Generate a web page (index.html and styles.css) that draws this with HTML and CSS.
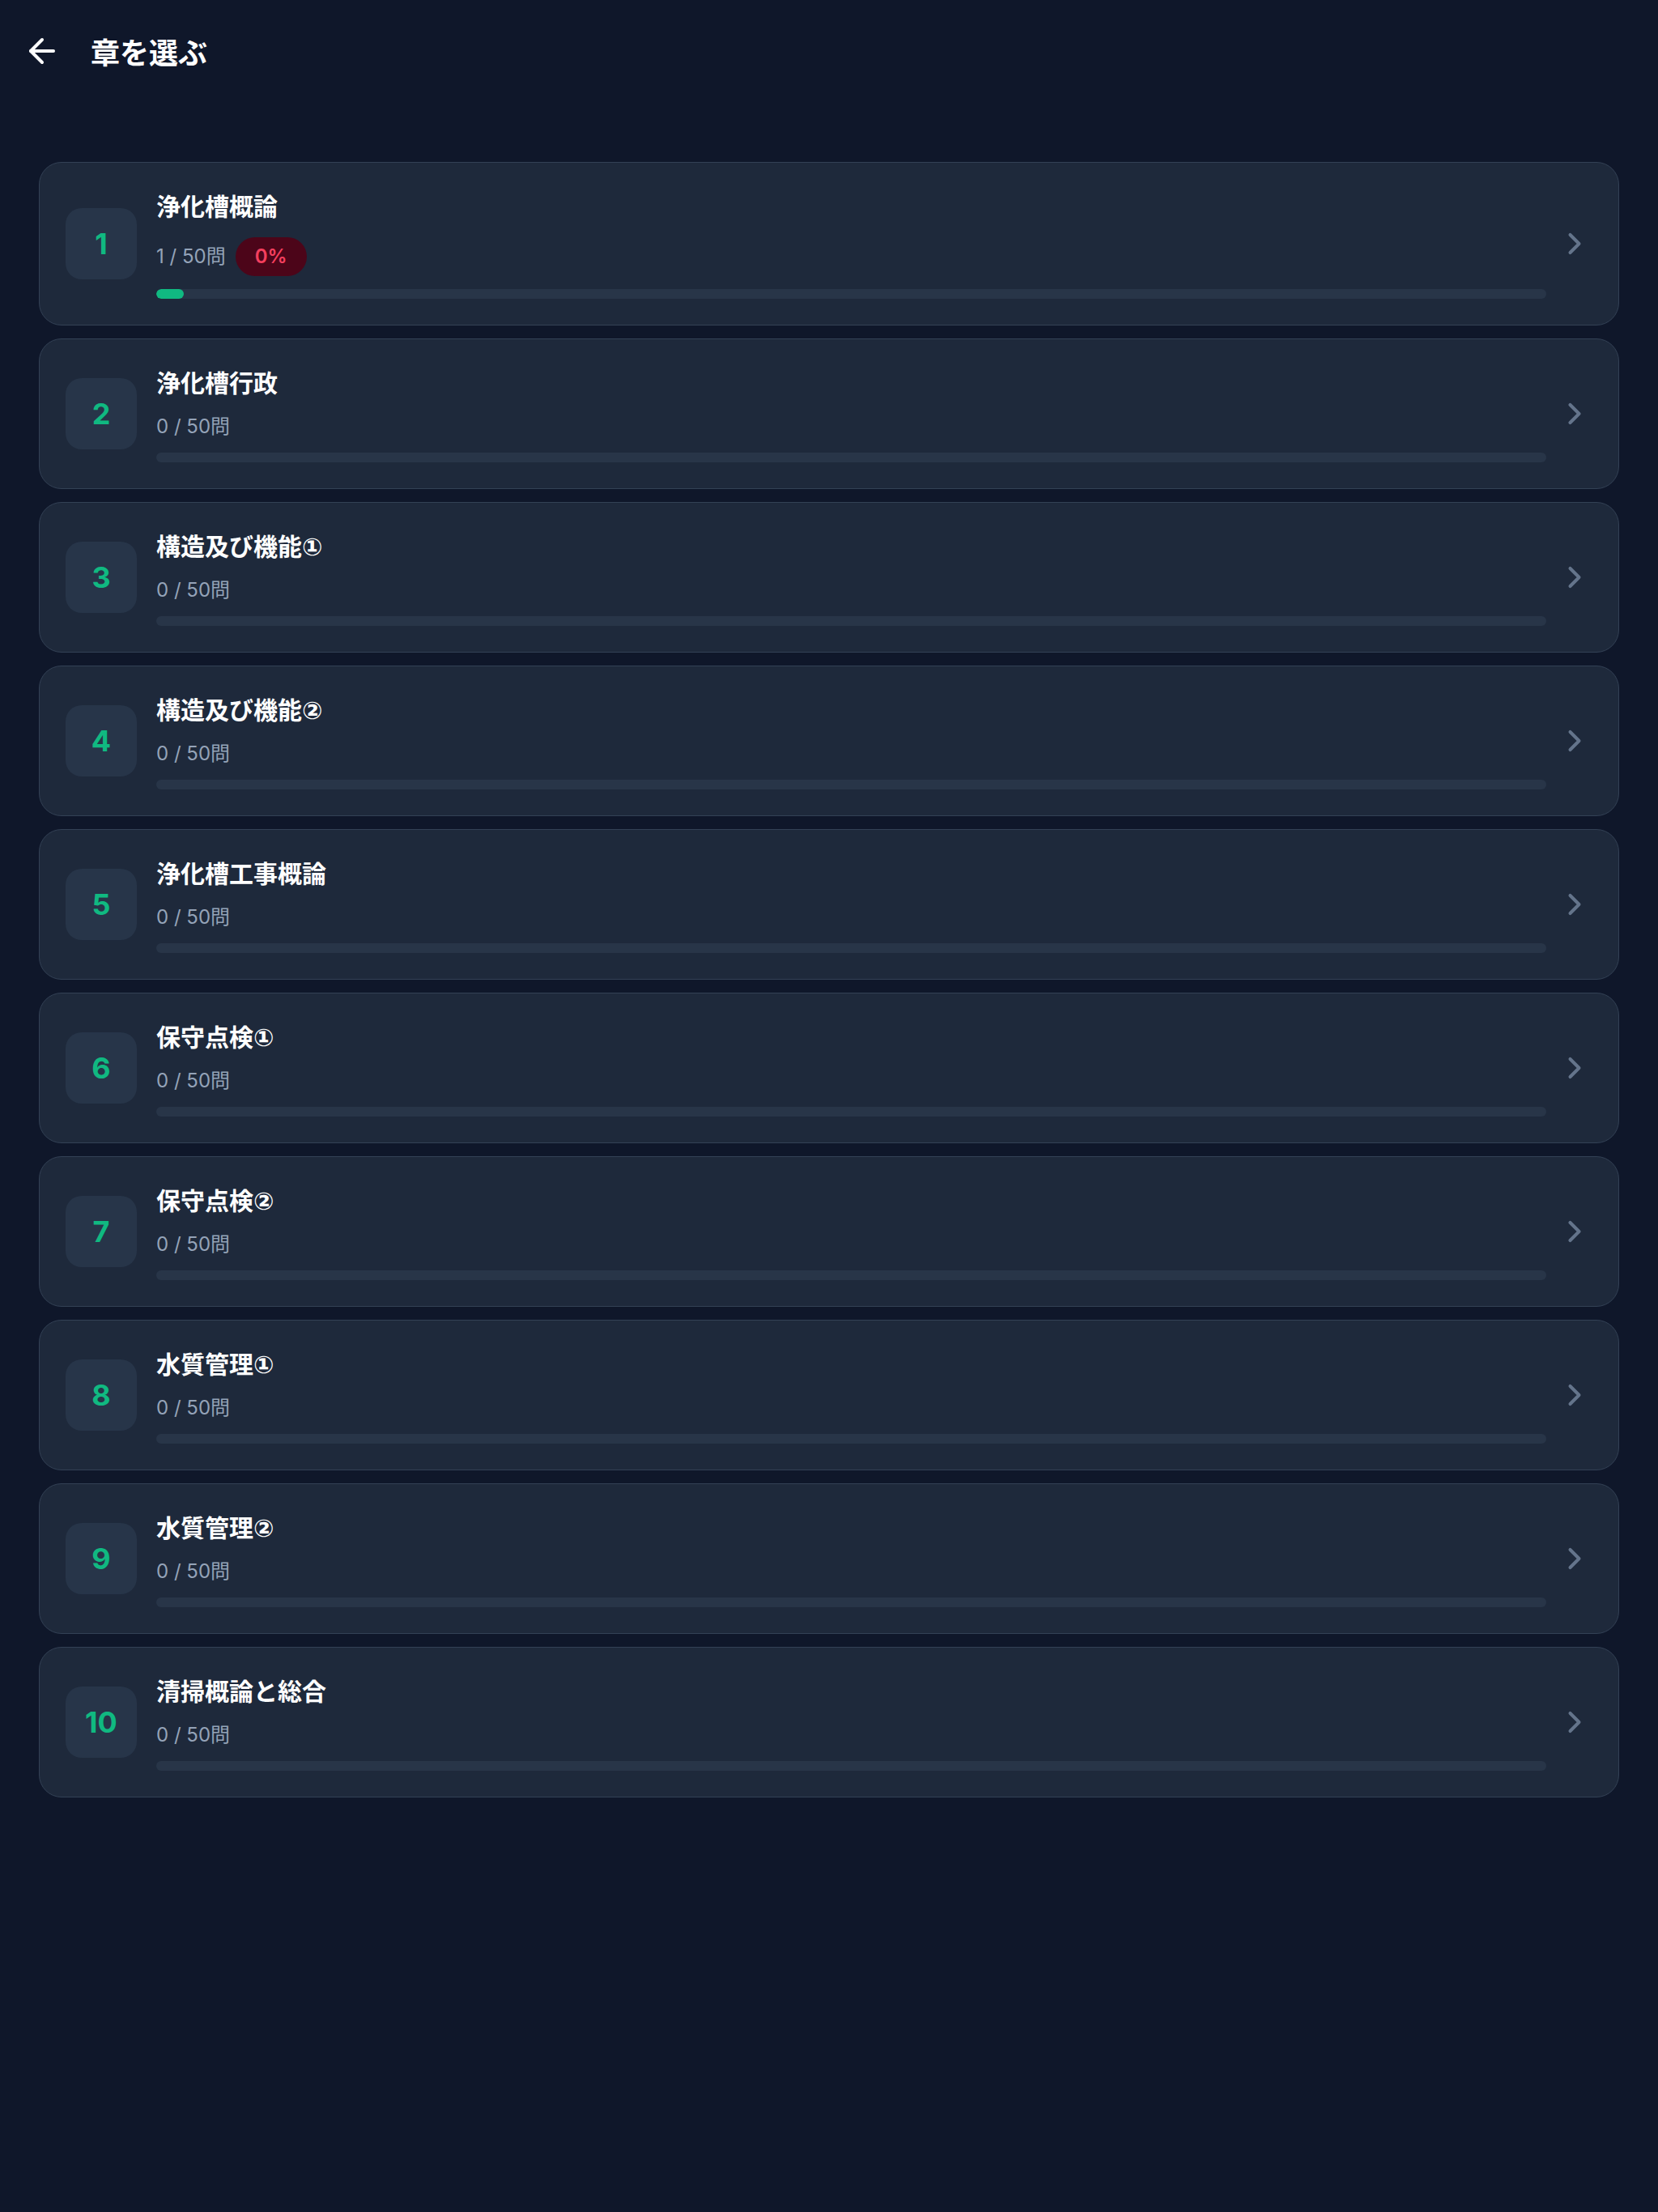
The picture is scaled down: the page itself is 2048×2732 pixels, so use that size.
FILE: index.html
```html
<!DOCTYPE html>
<html lang="ja">
<head>
    <meta charset="UTF-8">
    <meta name="viewport" content="width=device-width, initial-scale=1.0">
    <title>章を選ぶ</title>
    <link rel="stylesheet" href="styles.css">
</head>
<body>
    <header class="top-bar">
        <button class="back-btn" aria-label="戻る">
            <svg width="48" height="48" viewBox="0 0 24 24" fill="none" stroke="currentColor" stroke-width="2" stroke-linecap="round" stroke-linejoin="round">
                <path d="m12 19-7-7 7-7"/>
                <path d="M19 12H5"/>
            </svg>
        </button>
        <h1>章を選ぶ</h1>
    </header>

    <main class="chapter-list">
        <a class="chapter-card" href="#">
            <div class="chapter-num">1</div>
            <div class="chapter-body">
                <div class="chapter-title">浄化槽概論</div>
                <div class="chapter-meta">
                    <span class="count">1 / 50問</span>
                    <span class="rate-badge">0%</span>
                </div>
                <div class="progress"><div class="progress-fill" style="width: 2%"></div></div>
            </div>
            <svg class="chevron" width="44" height="44" viewBox="0 0 24 24" fill="none" stroke="currentColor" stroke-width="2.2" stroke-linecap="round" stroke-linejoin="round"><path d="m9 18 6-6-6-6"/></svg>
        </a>

        <a class="chapter-card" href="#">
            <div class="chapter-num">2</div>
            <div class="chapter-body">
                <div class="chapter-title">浄化槽行政</div>
                <div class="chapter-meta"><span class="count">0 / 50問</span></div>
                <div class="progress"></div>
            </div>
            <svg class="chevron" width="44" height="44" viewBox="0 0 24 24" fill="none" stroke="currentColor" stroke-width="2.2" stroke-linecap="round" stroke-linejoin="round"><path d="m9 18 6-6-6-6"/></svg>
        </a>

        <a class="chapter-card" href="#">
            <div class="chapter-num">3</div>
            <div class="chapter-body">
                <div class="chapter-title">構造及び機能①</div>
                <div class="chapter-meta"><span class="count">0 / 50問</span></div>
                <div class="progress"></div>
            </div>
            <svg class="chevron" width="44" height="44" viewBox="0 0 24 24" fill="none" stroke="currentColor" stroke-width="2.2" stroke-linecap="round" stroke-linejoin="round"><path d="m9 18 6-6-6-6"/></svg>
        </a>

        <a class="chapter-card" href="#">
            <div class="chapter-num">4</div>
            <div class="chapter-body">
                <div class="chapter-title">構造及び機能②</div>
                <div class="chapter-meta"><span class="count">0 / 50問</span></div>
                <div class="progress"></div>
            </div>
            <svg class="chevron" width="44" height="44" viewBox="0 0 24 24" fill="none" stroke="currentColor" stroke-width="2.2" stroke-linecap="round" stroke-linejoin="round"><path d="m9 18 6-6-6-6"/></svg>
        </a>

        <a class="chapter-card" href="#">
            <div class="chapter-num">5</div>
            <div class="chapter-body">
                <div class="chapter-title">浄化槽工事概論</div>
                <div class="chapter-meta"><span class="count">0 / 50問</span></div>
                <div class="progress"></div>
            </div>
            <svg class="chevron" width="44" height="44" viewBox="0 0 24 24" fill="none" stroke="currentColor" stroke-width="2.2" stroke-linecap="round" stroke-linejoin="round"><path d="m9 18 6-6-6-6"/></svg>
        </a>

        <a class="chapter-card" href="#">
            <div class="chapter-num">6</div>
            <div class="chapter-body">
                <div class="chapter-title">保守点検①</div>
                <div class="chapter-meta"><span class="count">0 / 50問</span></div>
                <div class="progress"></div>
            </div>
            <svg class="chevron" width="44" height="44" viewBox="0 0 24 24" fill="none" stroke="currentColor" stroke-width="2.2" stroke-linecap="round" stroke-linejoin="round"><path d="m9 18 6-6-6-6"/></svg>
        </a>

        <a class="chapter-card" href="#">
            <div class="chapter-num">7</div>
            <div class="chapter-body">
                <div class="chapter-title">保守点検②</div>
                <div class="chapter-meta"><span class="count">0 / 50問</span></div>
                <div class="progress"></div>
            </div>
            <svg class="chevron" width="44" height="44" viewBox="0 0 24 24" fill="none" stroke="currentColor" stroke-width="2.2" stroke-linecap="round" stroke-linejoin="round"><path d="m9 18 6-6-6-6"/></svg>
        </a>

        <a class="chapter-card" href="#">
            <div class="chapter-num">8</div>
            <div class="chapter-body">
                <div class="chapter-title">水質管理①</div>
                <div class="chapter-meta"><span class="count">0 / 50問</span></div>
                <div class="progress"></div>
            </div>
            <svg class="chevron" width="44" height="44" viewBox="0 0 24 24" fill="none" stroke="currentColor" stroke-width="2.2" stroke-linecap="round" stroke-linejoin="round"><path d="m9 18 6-6-6-6"/></svg>
        </a>

        <a class="chapter-card" href="#">
            <div class="chapter-num">9</div>
            <div class="chapter-body">
                <div class="chapter-title">水質管理②</div>
                <div class="chapter-meta"><span class="count">0 / 50問</span></div>
                <div class="progress"></div>
            </div>
            <svg class="chevron" width="44" height="44" viewBox="0 0 24 24" fill="none" stroke="currentColor" stroke-width="2.2" stroke-linecap="round" stroke-linejoin="round"><path d="m9 18 6-6-6-6"/></svg>
        </a>

        <a class="chapter-card" href="#">
            <div class="chapter-num">10</div>
            <div class="chapter-body">
                <div class="chapter-title">清掃概論と総合</div>
                <div class="chapter-meta"><span class="count">0 / 50問</span></div>
                <div class="progress"></div>
            </div>
            <svg class="chevron" width="44" height="44" viewBox="0 0 24 24" fill="none" stroke="currentColor" stroke-width="2.2" stroke-linecap="round" stroke-linejoin="round"><path d="m9 18 6-6-6-6"/></svg>
        </a>
    </main>
</body>
</html>
```

FILE: styles.css
```css
body {
    margin: 0;
    min-height: 100vh;
    background: #0f172a;
    color: #f8fafc;
    font-family: Inter, "Noto Sans CJK JP", sans-serif;
}

/* 上部バー */
.top-bar {
    display: flex;
    align-items: center;
    height: 126px;
    padding: 0 20px;
}
.back-btn {
    display: flex;
    align-items: center;
    justify-content: center;
    width: 64px;
    height: 64px;
    padding: 0;
    margin-right: 28px;
    background: none;
    border: none;
    color: #ffffff;
    cursor: pointer;
}
.top-bar h1 {
    margin: 0;
    font-family: "Noto Sans CJK JP", sans-serif;
    font-size: 36px;
    font-weight: 700;
    line-height: 1;
    color: #ffffff;
}

/* 章リスト */
.chapter-list {
    display: flex;
    flex-direction: column;
    gap: 16px;
    padding: 74px 48px 48px;
}
.chapter-card {
    display: flex;
    align-items: center;
    padding: 32px;
    background: #1e293b;
    border: 1px solid #334155;
    border-radius: 28px;
    color: inherit;
    text-decoration: none;
}
.chapter-num {
    flex: none;
    display: flex;
    align-items: center;
    justify-content: center;
    width: 88px;
    height: 88px;
    margin-right: 24px;
    border-radius: 20px;
    background: #273549;
    color: #10b981;
    font-size: 36px;
    font-weight: 700;
}
.chapter-body {
    flex: 1;
    min-width: 0;
    margin-right: 13px;
}
/* 丸数字は DejaVu の小さめのグリフを使う */
.chapter-title {
    font-family: "DejaVu Sans", "Noto Sans CJK JP", sans-serif;
    font-size: 30px;
    font-weight: 700;
    line-height: 46px;
    color: #ffffff;
}
.chapter-meta {
    display: flex;
    align-items: center;
    margin-top: 14px;
    min-height: 32px;
}
.count {
    font-size: 24px;
    line-height: 32px;
    color: #94a3b8;
}
.rate-badge {
    margin-left: 12px;
    padding: 8px 24px;
    border-radius: 24px;
    background: #4c0519;
    color: #f43f5e;
    font-size: 24px;
    font-weight: 600;
    line-height: 32px;
}
.progress {
    height: 12px;
    margin-top: 16px;
    border-radius: 6px;
    background: #283548;
    overflow: hidden;
}
.progress-fill {
    height: 100%;
    border-radius: 6px;
    background: #10b981;
}
.chevron {
    flex: none;
    color: #64748b;
}
```
